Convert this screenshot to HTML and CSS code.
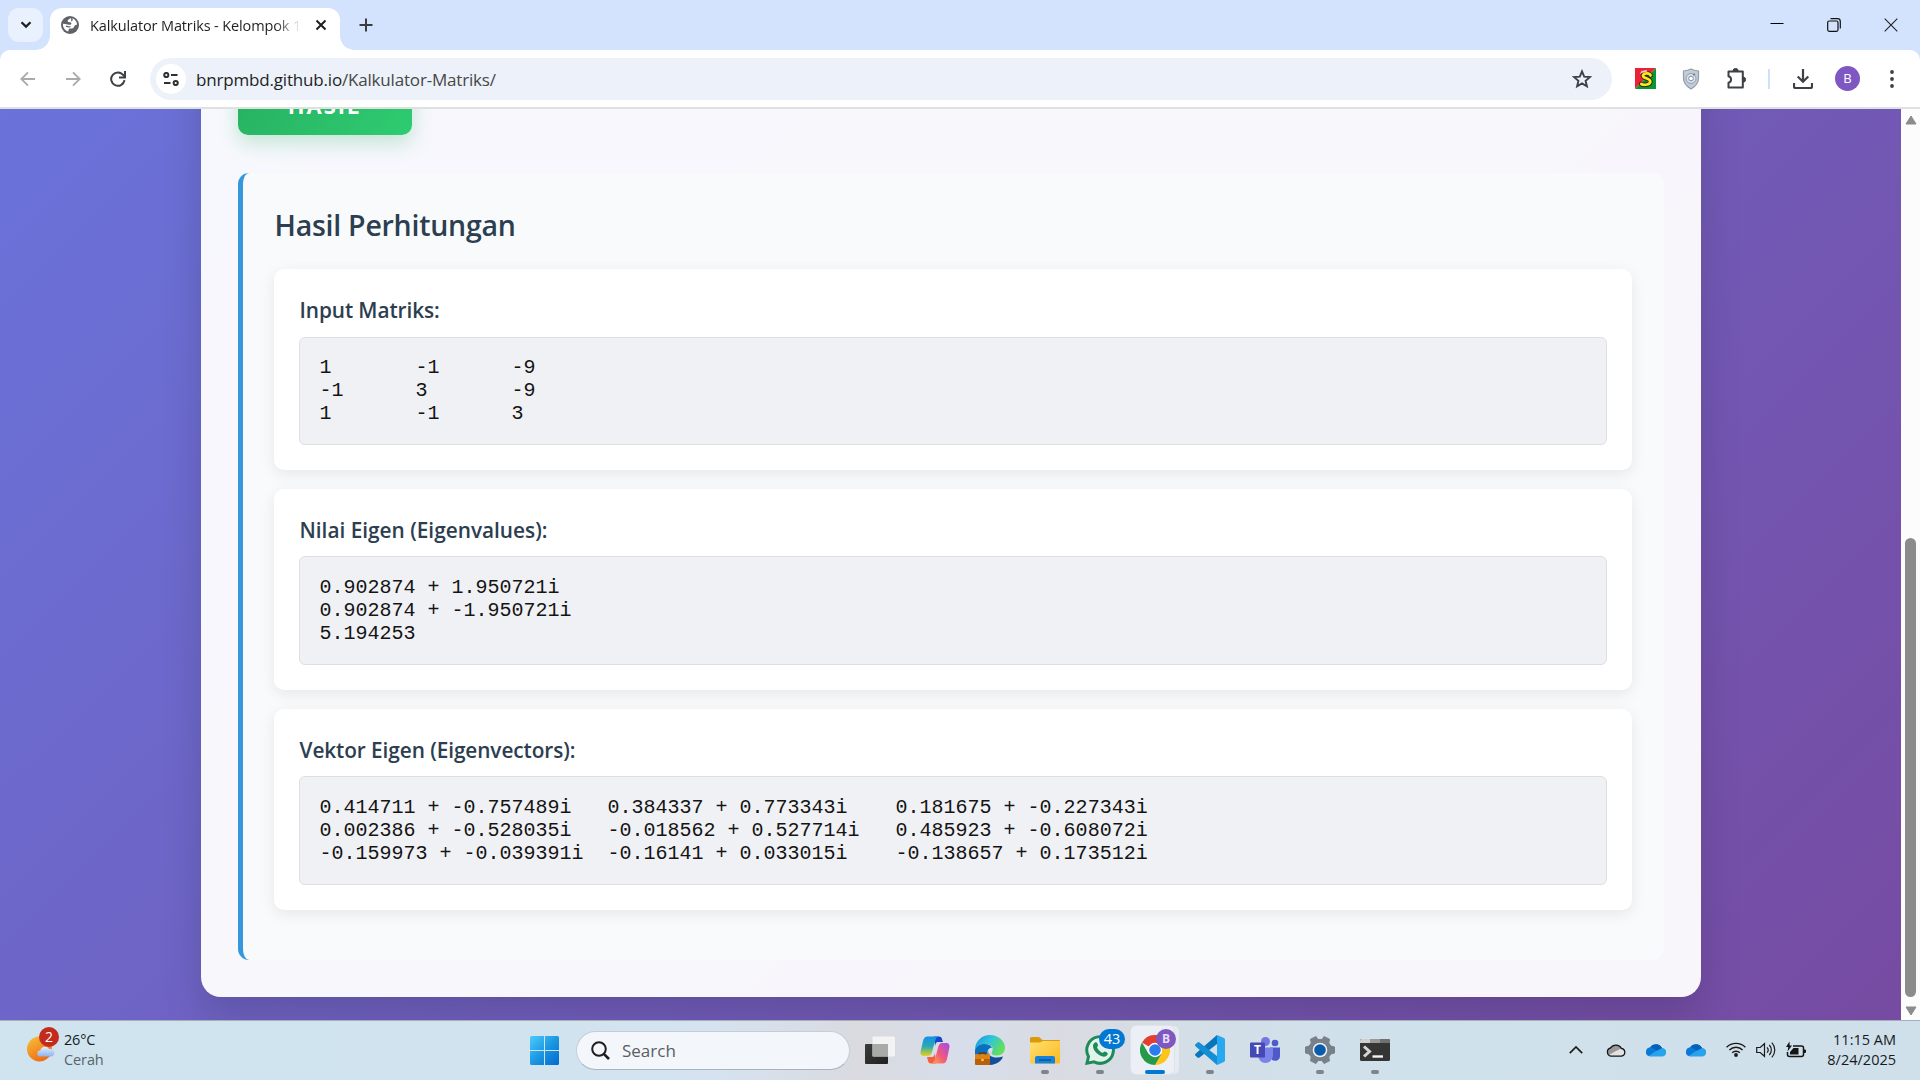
FILE: index.html
```html
<!DOCTYPE html>
<html lang="id">
<head>
<meta charset="utf-8">
<title>Kalkulator Matriks - Kelompok 1</title>
<link rel="stylesheet" href="styles.css">
</head>
<body>
<div class="screen">
  <header class="tabstrip">
    <div class="tab-search"><svg width="12" height="8" viewBox="0 0 12 8"><path d="M1.5 1.2 6 5.6l4.500-4.400" fill="none" stroke="#1f1f1f" stroke-width="2.200"/></svg></div>
    <div class="tab">
      <svg class="globe" width="18" height="18" viewBox="0 0 18 18"><circle cx="9" cy="9" r="9" fill="#5f6368"/><path d="M9.800 2C8.500 3 7 3.500 6.600 4.900c0 1.200 1.800 1.300 2.800 1.400 1 .2 1.200 1.300.7 2-.8 1-2.400.4-3.600.2C5 8.200 3.400 7.800 2 7.800 1.600 11.500 4 14.600 7 15.600c.9-.8.3-1.900 1-2.700 1-.8 2.700-.2 3.900-.7 1.500-.7 1.200-2.500 2.600-3.200.6-.3 1.100-.2 1.600-.1C16 5.300 13.300 2.300 9.800 2z" fill="#fff"/><path d="M10 2.500c1.800.4 1.200 2 .2 2.500M9.500 10.500c-1.500.8-3 .2-4.500-.4" fill="none" stroke="#5f6368" stroke-width="1.300"/></svg>
      <span class="tab-title">Kalkulator Matriks - Kelompok 1</span>
      <svg class="tab-close" width="12" height="12" viewBox="0 0 12 12"><path d="M1.500 1.500l9 9m0-9l-9 9" stroke="#1f1f1f" stroke-width="2"/></svg>
    </div>
    <svg class="new-tab" width="14" height="14" viewBox="0 0 14 14"><path d="M7 .5v13M.5 7h13" stroke="#3c3c3c" stroke-width="2"/></svg>
    <div class="window-controls">
      <svg width="14" height="14" viewBox="0 0 14 14"><path d="M.5 5.500h13" stroke="#000" stroke-width="1"/></svg>
      <svg width="14" height="14" viewBox="0 0 14 14"><rect x=".7" y="3" width="10.300" height="10.300" rx="1.500" fill="none" stroke="#111" stroke-width="1.200"/><path d="M3.500.7h7a2.800 2.800 0 0 1 2.800 2.800v7" fill="none" stroke="#111" stroke-width="1.200"/></svg>
      <svg width="14" height="14" viewBox="0 0 14 14"><path d="M.7.7l12.600 12.600m0-12.600L.7 13.300" stroke="#222" stroke-width="1.100"/></svg>
    </div>
  </header>

  <nav class="toolbar">
    <div class="nav-buttons">
      <svg width="16" height="16" viewBox="0 0 16 16"><path d="M15 8H1.500M8 1.300 1.300 8 8 14.700" fill="none" stroke="#a9abad" stroke-width="1.900"/></svg>
      <svg width="16" height="16" viewBox="0 0 16 16"><path d="M1 8h13.500M8 1.300 14.700 8 8 14.700" fill="none" stroke="#a9abad" stroke-width="1.900"/></svg>
      <svg width="16" height="16" viewBox="0 0 16 16"><path d="M14.500 9.200A6.700 6.700 0 1 1 13.400 4.300L14.700 6" fill="none" stroke="#3e4144" stroke-width="2"/><path d="M15 0v6.500H9" fill="none" stroke="#3e4144" stroke-width="2"/></svg>
    </div>
    <div class="omnibox">
      <span class="site-info"><svg width="16" height="14" viewBox="0 0 16 14"><g fill="none" stroke="#303133" stroke-width="2"><circle cx="3.300" cy="3" r="2.100"/><path d="M8 3h6.500M1 11h6.500"/><circle cx="12.700" cy="11" r="2.100"/></g></svg></span>
      <span class="url">bnrpmbd.github.io<span class="url-path">/Kalkulator-Matriks/</span></span>
      <svg class="star" width="20" height="20" viewBox="0 0 20 20"><path d="M10 2.400l2.200 5.200 5.700.5-4.300 3.700 1.300 5.500-4.900-2.900-4.900 2.900 1.300-5.500L2.100 8.100l5.700-.5z" fill="none" stroke="#3e4144" stroke-width="1.900"/></svg>
    </div>
    <div class="extensions">
      <svg width="21" height="21" viewBox="0 0 21 21"><path d="M0 0h21L0 21z" fill="#ee2038"/><path d="M21 0v21H0z" fill="#0a9636"/><g fill="none" stroke-linecap="round" stroke-linejoin="round"><path d="M15.500 7.500C15 5 9 4.500 8 7.500c-.6 3 7 2.500 7.300 5.800.2 3-5.800 4.700-9 2.700" stroke="#222b12" stroke-width="4.600"/><path d="M15.500 7.500C15 5 9 4.500 8 7.500c-.6 3 7 2.500 7.300 5.800.2 3-5.800 4.700-9 2.700" stroke="#ffe51c" stroke-width="2.800"/></g><path d="M4.500 6.500 6.500 3l5-1 1 1.500-6 1.500z" fill="#eec4c8"/></svg>
      <svg width="18" height="22" viewBox="0 0 18 22"><path d="M9 1c2.500 1.400 5 1.800 7.500 2v7c0 5-3 8.500-7.500 11-4.500-2.500-7.500-6-7.500-11V3C4 2.800 6.500 2.400 9 1z" fill="#c5ccd6" stroke="#929dab" stroke-width="1.200"/><circle cx="9" cy="10.500" r="5" fill="#d8e0e8" stroke="#8fa0b4"/><circle cx="9" cy="10.500" r="2.300" fill="#fff" stroke="#7d8fa5"/><path d="M11 7l2-1" stroke="#6f7f95" stroke-width="1.500"/></svg>
      <svg width="21" height="22" viewBox="0 0 21 22"><path d="M2.500 3.500h14.300v16H2.500v-4.700a3.400 3.400 0 0 0 0-6.600z" fill="none" stroke="#3e4144" stroke-width="2" stroke-linejoin="round"/><path d="M7 3a2.600 2.600 0 0 1 5.200 0zM17 9a2.600 2.600 0 0 1 0 5.200z" fill="#3e4144" stroke="#3e4144"/></svg>
      <i class="divider"></i>
      <svg width="20" height="20" viewBox="0 0 20 20"><path d="M10 0v12.500M4.700 7.500 10 12.800l5.300-5.300M1 14v3.500q0 1.500 1.500 1.500h15q1.500 0 1.500-1.500V14" fill="none" stroke="#3e4144" stroke-width="2.200"/></svg>
      <span class="avatar">B</span>
      <svg width="4" height="18" viewBox="0 0 4 18"><g fill="#3e4144"><circle cx="2" cy="2" r="1.900"/><circle cx="2" cy="9" r="1.900"/><circle cx="2" cy="16" r="1.900"/></g></svg>
    </div>
  </nav>

  <div class="viewport">
    <main class="page">
      <section class="container">
        <div class="submit">HASIL</div>
        <div class="results">
          <h2>Hasil Perhitungan</h2>
          <article class="card">
            <h3>Input Matriks:</h3>
<pre>1&#9;-1&#9;-9
-1&#9;3&#9;-9
1&#9;-1&#9;3</pre>
          </article>
          <article class="card tall">
            <h3 class="values">Nilai Eigen (Eigenvalues):</h3>
<pre>0.902874 + 1.950721i
0.902874 + -1.950721i
5.194253</pre>
          </article>
          <article class="card tall">
            <h3>Vektor Eigen (Eigenvectors):</h3>
<pre>0.414711 + -0.757489i&#9;0.384337 + 0.773343i&#9;0.181675 + -0.227343i
0.002386 + -0.528035i&#9;-0.018562 + 0.527714i&#9;0.485923 + -0.608072i
-0.159973 + -0.039391i&#9;-0.16141 + 0.033015i&#9;-0.138657 + 0.173512i</pre>
          </article>
        </div>
      </section>
    </main>
    <aside class="scrollbar">
      <svg width="12" height="10" viewBox="0 0 12 10"><path d="M6 1 11 9H1z" fill="#8b8b8b" stroke="#8b8b8b" stroke-linejoin="round"/></svg>
      <i class="thumb"></i>
      <svg width="12" height="10" viewBox="0 0 12 10"><path d="M6 9 11 1H1z" fill="#8b8b8b" stroke="#8b8b8b" stroke-linejoin="round"/></svg>
    </aside>
  </div>

  <footer class="taskbar">
    <div class="weather">
      <span class="weather-icon">
        <svg width="32" height="36" viewBox="0 0 32 36"><defs><linearGradient id="sun" x1="0" y1="0" x2=".6" y2="1"><stop offset="0" stop-color="#f5c33b"/><stop offset="1" stop-color="#f26a12"/></linearGradient><linearGradient id="cl" x1="0" y1="0" x2="0" y2="1"><stop offset="0" stop-color="#e2ecff"/><stop offset="1" stop-color="#8fb2ee"/></linearGradient></defs><circle cx="12.500" cy="22" r="12.500" fill="url(#sun)"/><path d="M13.500 29.500a3 3 0 0 1-.3-6 5 5 0 0 1 9-1.500 3.700 3.700 0 0 1 2.300 7.500z" fill="url(#cl)"/></svg>
        <b class="weather-badge">2</b>
      </span>
      <div class="weather-text"><span>26°C</span><span class="muted">Cerah</span></div>
    </div>

    <div class="dock">
      <svg class="start" width="29" height="29" viewBox="0 0 29 29"><defs><linearGradient id="win" x1="0" y1="0" x2="1" y2="1"><stop offset="0" stop-color="#4ccbfc"/><stop offset=".5" stop-color="#1c98e2"/><stop offset="1" stop-color="#0069cc"/></linearGradient></defs><path d="M1.500 0H14v14H0V1.500Q0 0 1.500 0zM15 0h12.500Q29 0 29 1.500V14H15zM0 15h14v14H1.500Q0 29 0 27.500zM15 15h14v12.500q0 1.500-1.500 1.500H15z" fill="url(#win)"/></svg>
      <div class="search"><svg width="19" height="19" viewBox="0 0 19 19"><circle cx="8" cy="8" r="6.800" fill="none" stroke="#1d1d1d" stroke-width="2"/><path d="M12.800 12.800 18 18" stroke="#1d1d1d" stroke-width="2.600"/></svg><span>Search</span></div>
      <div class="app"><svg width="30" height="30" viewBox="0 0 30 30"><defs><linearGradient id="tv" x1="0" y1="0" x2="1" y2="1"><stop offset="0" stop-color="#3b3b3b"/><stop offset="1" stop-color="#20211f"/></linearGradient></defs><rect x="0" y="9" width="23" height="20" rx="1" fill="url(#tv)"/><rect x="7.500" y="1.500" width="22.500" height="20" rx="1" fill="#f5f5f5" opacity=".9"/><path d="M7.500 9H23v12.500H7.500z" fill="#a9aba8"/></svg></div>
      <div class="app"><svg width="30" height="30" viewBox="0 0 30 30"><defs><linearGradient id="ca" x1="0" y1="0" x2="0" y2="1"><stop offset="0" stop-color="#1291ea"/><stop offset=".5" stop-color="#28aab0"/><stop offset="1" stop-color="#e8d020"/></linearGradient><linearGradient id="cb" x1="1" y1="0" x2="0" y2="1"><stop offset="0" stop-color="#a44bea"/><stop offset=".55" stop-color="#f0597c"/><stop offset="1" stop-color="#fda854"/></linearGradient></defs><path d="M14 1.500h5c3 0 3 3 4 5.500h-5c-2 0-2.500 2-3 4z" fill="#1746c9"/><path d="M7.500 1.500H18c-2 1-2.500 3-3.200 5.500l-3 10.500c-.7 2-1.500 3.500-4 3.500H4c-3 0-4-2-3.300-5L3 6c.8-3 2-4.500 4.500-4.500z" fill="url(#ca)"/><path d="M16 28.500h-5c-3 0-3-3-4-6.500h5c2 0 2.500-2 3-4z" fill="#f1613d"/><path d="M22.500 28.500H12c2-1 2.500-3 3.200-5.500l3-11c.7-2 1.500-4 4-4H26c3 0 4 2 3.300 5L27 24c-.8 3-2 4.500-4.500 4.500z" fill="url(#cb)"/></svg></div>
      <div class="app"><svg width="30" height="30" viewBox="0 0 30 30"><defs><linearGradient id="eg" x1="0" y1="0" x2="1" y2=".5"><stop offset="0" stop-color="#1793d9"/><stop offset=".5" stop-color="#30c3dc"/><stop offset="1" stop-color="#63e05b"/></linearGradient></defs><path d="M0 15C0 6 7 0 15 0s15 6 15 12.500c0 5-3.500 8-8 8-4 0-5.500-1.500-5.500-2.500 0-.8 1.200-1.500 1.200-4 0-3-3-5-7.700-5C5 9 1 11 0 15z" fill="url(#eg)"/><path d="M0 15C1 11 5 9 9.500 9c4 0 6.500 1.500 7.600 3.700-2.600-.2-4.600 1.800-4.600 4.300 0 1 .2 1.800.6 2.500H0z" fill="#0872c0"/><path d="M13 16c0 5 6 8.500 15 5.500-1.500 4.500-6 8-13 8.500v-9z" fill="#114f98"/><path d="M0 19.500h15V30H1q-1 0-1-1z" fill="#b85f0b"/><path d="M0 19.500h15V24H0z" fill="#dd8114"/><path d="M4.500 19.500V18h6v1.500" fill="none" stroke="#713705" stroke-width="1.400"/><circle cx="7.500" cy="25" r="1.300" fill="#ffd14a"/></svg></div>
      <div class="app"><svg width="30" height="30" viewBox="0 0 30 30"><defs><linearGradient id="fo" x1="0" y1="0" x2="1" y2="1"><stop offset="0" stop-color="#ffdf75"/><stop offset="1" stop-color="#fbb91b"/></linearGradient></defs><path d="M0 3.500Q0 2 1.500 2H9l3.500 3H29q1 0 1 1v5H0z" fill="#dd9a08"/><path d="M0 7.500h10L13 6h17v21q0 1.500-1.500 1.500h-27Q0 28.500 0 27z" fill="url(#fo)"/><path d="M5 28.500V23q0-2 2-2h16q2 0 2 2v5.500z" fill="#1482dc"/><path d="M9 25h12" stroke="#0a5293" stroke-width="1.400"/></svg><i class="dot"></i></div>
      <div class="app"><svg width="30" height="30" viewBox="0 0 30 30"><path d="M2 28.200l1.500-6.700A13.300 13.300 0 1 1 9 26.800z" fill="#e4f3ea" stroke="#1d8a5b" stroke-width="3"/><path d="M10 7.500c1.500-1 2.500.3 3 2.500.3 1.500-1.500 1.500-.7 3 1.200 2.200 2.800 3.800 5 4.700 1.400.5 1.500-1.500 3-1 2 .8 3 1.500 2.200 3-1.500 2.500-4.500 2.500-8 .6-3.500-2-6-5-6.500-8.500-.2-1.800.5-3.500 2-4.300z" fill="#1d8a5b"/></svg><i class="dot"></i><b class="count">43</b></div>
      <div class="app active"><svg width="30" height="30" viewBox="0 0 30 30"><path d="M15 15 2 7.500A15 15 0 0 1 28 7.500z" fill="#e53e30"/><path d="M28 7.500A15 15 0 0 1 15 30l6.500-11.500L20 7.500z" fill="#fdc51a"/><path d="M2 7.500A15 15 0 0 0 15 30l6.500-11.300-13 0z" fill="#269a48"/><circle cx="15" cy="15" r="7.200" fill="#fff"/><circle cx="15" cy="15" r="5.800" fill="#2b7cec"/></svg><i class="bar"></i><b class="profile">B</b></div>
      <div class="app"><svg width="30" height="30" viewBox="0 0 30 30"><path d="M22 0v9L4.500 22.500q-1 .8-2 0L.5 20.800q-1-1 0-2z" fill="#0877b9"/><path d="M22 30v-9L4.500 7.500q-1-.8-2 0L.5 9.200q-1 1 0 2z" fill="#138fd6"/><path d="M22 0l7 3q1 .5 1 1.800v20.400q0 1.300-1 1.800l-7 3z" fill="#27a9f2"/></svg><i class="dot"></i></div>
      <div class="app"><svg width="30" height="30" viewBox="0 0 30 30"><circle cx="15.500" cy="6.500" r="4.500" fill="#7278e0"/><circle cx="25" cy="8" r="3.300" fill="#5059c9"/><path d="M20 12.500h10V21c0 4-4 6-8 4z" fill="#5059c9"/><path d="M8 12.500h15V20a7.500 8 0 0 1-15 0z" fill="#7b83eb"/><rect y="7.500" width="15" height="15" rx="1" fill="#4449b5"/><text x="7.500" y="19" fill="#fff" font-family="Open Sans, sans-serif" font-size="12" font-weight="700" text-anchor="middle">T</text></svg></div>
      <div class="app"><svg width="30" height="30" viewBox="0 0 30 30"><path d="M11 1.500l2 3h4l2-3 5.500 2.700-.7 3.800 2 3L29.500 12v6l-3.700 1-2 3 .7 3.800L19 28.500l-2-3h-4l-2 3-5.500-2.700.7-3.800-2-3L.5 18v-6l3.700-1 2-3-.7-3.800z" fill="#78818a" stroke="#78818a" stroke-linejoin="round"/><circle cx="15" cy="15" r="7.300" fill="#eef1f4"/><circle cx="15" cy="15" r="5.800" fill="#0a5cab"/></svg><i class="dot"></i></div>
      <div class="app"><svg width="30" height="30" viewBox="0 0 30 30"><rect y="4" width="30" height="22" rx="1.500" fill="#353535"/><path d="M0 5.500Q0 4 1.500 4H10v4H0z" fill="#cfcfcf"/><path d="M10 4h10v4H10z" fill="#999"/><path d="M20 4h8.500Q30 4 30 5.500V8H20z" fill="#707070"/><path d="M4 11.500l5.500 5-5.500 5" fill="none" stroke="#d5d5d5" stroke-width="3"/><path d="M12.500 21.500H23" stroke="#f4f4f4" stroke-width="2.400"/></svg><i class="dot"></i></div>
    </div>

    <div class="tray">
      <svg width="14" height="8" viewBox="0 0 14 8"><path d="M.8 7.200 7 1l6.200 6.200" fill="none" stroke="#1c1c1c" stroke-width="1.700"/></svg>
      <svg width="20" height="14" viewBox="0 0 20 14"><path d="M5 13.200A4.200 4.200 0 0 1 4.500 5 6.500 6.500 0 0 1 15.500 5.500a3.900 3.900 0 0 1 0 7.700z" fill="#e3e3e3"/><path d="M4.500 5A6.500 6.500 0 0 1 15.500 5.500L10 8 3 12 1 9z" fill="#999"/><path d="M5 13.200A4.200 4.200 0 0 1 4.500 5 6.500 6.500 0 0 1 15.500 5.500a3.900 3.900 0 0 1 0 7.700z" fill="none" stroke="#151515" stroke-width="1.300"/></svg>
      <svg width="20" height="14" viewBox="0 0 20 14"><path d="M5 13.500A4.500 4.500 0 0 1 4 4.500 7 7 0 0 1 16 5a4.200 4.200 0 0 1 0 8.500z" fill="#26a3ea"/><path d="M4 4.500A7 7 0 0 1 16 5l-6 3-7.500 5A4.500 4.500 0 0 1 4 4.500z" fill="#0a78d4"/><path d="M5 4A6.500 6.500 0 0 1 16 5l-5 2.500z" fill="#0560b8"/></svg>
      <svg width="20" height="14" viewBox="0 0 20 14"><path d="M5 13.500A4.500 4.500 0 0 1 4 4.500 7 7 0 0 1 16 5a4.200 4.200 0 0 1 0 8.500z" fill="#26a3ea"/><path d="M4 4.500A7 7 0 0 1 16 5l-6 3-7.500 5A4.500 4.500 0 0 1 4 4.500z" fill="#0a78d4"/><path d="M5 4A6.500 6.500 0 0 1 16 5l-5 2.500z" fill="#0560b8"/></svg>
      <svg class="wifi" width="20" height="15" viewBox="0 0 20 15"><g fill="none" stroke="#1a1a1a" stroke-width="1.400"><path d="M.6 5.300a13.300 13.300 0 0 1 18.800 0M3.400 8a9.300 9.300 0 0 1 13.200 0M6.200 10.800a5.400 5.400 0 0 1 7.600 0"/></g><circle cx="10" cy="13" r="1.900" fill="#1a1a1a"/></svg>
      <svg class="volume" width="20" height="16" viewBox="0 0 20 16"><g fill="none" stroke="#1a1a1a" stroke-width="1.200"><path d="M.7 5.500h3.500L8.500 1.700v12.600l-4.300-3.800H.7z"/><path d="M11 5.300a4 4 0 0 1 0 5.400M13.300 3a7.200 7.200 0 0 1 0 10M15.800.7a10.500 10.500 0 0 1 0 14.600"/></g></svg>
      <svg class="battery" width="20" height="17" viewBox="0 0 20 17"><path d="M7 5h8.500q2 0 2 2v6.500q0 2-2 2h-12q-2 0-2-2V11" fill="none" stroke="#151515" stroke-width="1.500"/><path d="M18 8.500h1q1 0 1 1V11q0 1-1 1h-1zM7.500 7h5v6.500H4V11z" fill="#151515"/><path d="M3.500.5 0 6h2.300L1.500 10.500 6 4.500H3.700z" fill="#151515"/></svg>
      <div class="clock"><span class="time">11:15 AM</span><span class="date">8/24/2025</span></div>
    </div>
  </footer>
</div>
</body>
</html>
```
FILE: styles.css
```css
* { box-sizing: border-box; }
body { margin: 0; font-family: "Open Sans", "Noto Sans", sans-serif; }
svg { display: block; flex: none; }
i { display: block; }
.screen { width: 1920px; height: 1080px; display: flex; flex-direction: column; overflow: hidden; background: #d3e2fd; }

/* Tab strip */
.tabstrip { height: 50px; flex: none; display: flex; align-items: flex-start; padding: 8px 22px 0 8px; }
.tab-search { width: 35px; height: 34px; border-radius: 11px; background: #e9f1fe; display: flex; align-items: center; justify-content: center; }
.tab { position: relative; width: 290px; height: 42px; margin-left: 7px; padding: 0 14px 8px 11px; border-radius: 12px 12px 0 0; background: #fff; display: flex; align-items: center; }
.tab::before, .tab::after { content: ""; position: absolute; bottom: 0; width: 14px; height: 14px; }
.tab::before { left: -14px; background: radial-gradient(circle at 0 0, transparent 13.500px, #fff 14px); }
.tab::after { right: -14px; background: radial-gradient(circle at 100% 0, transparent 13.500px, #fff 14px); }
.tab-title { width: 211px; margin: 0 14px 0 11px; padding-top: 1px; font-size: 14.500px; letter-spacing: -.13px; line-height: 20px; white-space: nowrap; color: #1f1f1f; -webkit-mask-image: linear-gradient(90deg, #000 185px, transparent 211px); mask-image: linear-gradient(90deg, #000 185px, transparent 211px); }
.new-tab { margin: 10px 0 0 19px; }
.window-controls { display: flex; gap: 43px; margin: 10px 0 0 auto; }

/* Toolbar */
.toolbar { height: 59px; flex: none; background: #fff; border-bottom: 2px solid #dfe1e0; border-radius: 10px 10px 0 0; display: flex; align-items: center; padding: 0 26px 0 20px; }
.nav-buttons { display: flex; gap: 29px; width: 130px; }
.omnibox { width: 1462px; height: 42px; border-radius: 21px; background: #ecf1fa; display: flex; align-items: center; padding: 0 20px 0 6px; }
.site-info { width: 30px; height: 30px; border-radius: 50%; background: #fff; display: flex; align-items: center; justify-content: center; }
.url { margin-left: 10px; padding-top: 2px; font-size: 17px; letter-spacing: -.18px; color: #1f1f1f; white-space: nowrap; }
.url-path { color: #474747; }
.star { margin-left: auto; }
.extensions { flex: 1; display: flex; align-items: center; padding-left: 23px; }
.extensions > :nth-child(2) { margin-left: 26px; }
.extensions > :nth-child(3) { margin-left: 26px; }
.divider { width: 2px; height: 20px; background: #cfe0fc; margin-left: 21px; }
.divider + svg { margin-left: 23px; }
.avatar { width: 25px; height: 25px; margin: 0 auto 0 22px; border-radius: 50%; background: #7e57c2; color: #fff; font-size: 13px; line-height: 25px; text-align: center; }

/* Web page */
.viewport { flex: 1; min-height: 0; display: flex; }
.page { width: 1901px; display: flex; flex-direction: column; justify-content: flex-end; align-items: center; padding-bottom: 23px; overflow: hidden; background: linear-gradient(135deg, #667eea 0%, #764ba2 100%) 0 100% / 1901px 1737px no-repeat; }
.container { width: 1500px; flex: none; padding: 37px; border-radius: 20px; background: rgba(255, 255, 255, .95); box-shadow: 0 20px 40px rgba(0, 0, 0, .15); display: flex; flex-direction: column; align-items: flex-start; }
.submit { width: 174px; height: 60px; border-radius: 10px; background: linear-gradient(135deg, #27ae60, #2ecc71); box-shadow: 0 8px 20px rgba(39, 174, 96, .25); color: #fff; font-weight: 700; font-size: 22px; letter-spacing: 1.900px; line-height: 60px; text-align: center; }
.results { align-self: stretch; margin-top: 38px; height: 787px; padding: 31px 31px 0; border-left: 5px solid #3498db; border-radius: 11px; background: #f8fafc; }
h2 { margin: 0 0 19px; height: 46px; padding-left: 1px; line-height: 43px; font-size: 28.500px; letter-spacing: -.25px; font-weight: 600; color: #2c3e50; }
.card { width: 1358px; height: 201px; margin-bottom: 19px; padding: 25px; border-radius: 10px; background: #fff; box-shadow: 0 4px 15px rgba(0, 0, 0, .08); }
h3 { margin: 0 0 11px; height: 32px; padding-left: 1px; line-height: 32px; font-size: 20.800px; letter-spacing: -.08px; font-weight: 600; color: #2c3e50; }
h3.values { letter-spacing: 0; }
pre { margin: 0; height: 108px; padding: 18px 20px; border: 1px solid #dddfe2; border-radius: 6px; background: #f0f1f5; color: #141414; font: 20px/23px "Liberation Mono", monospace; tab-size: 8; }
.tall h3 { margin-bottom: 10px; }
.tall pre { height: 109px; padding-top: 19px; }
.scrollbar { width: 19px; background: #fcfcfc; display: flex; flex-direction: column; align-items: center; padding: 6px 0 4px; }
.thumb { width: 11px; height: 459px; margin: auto 0 9px; border-radius: 6px; background: #8b8b8b; }

/* Taskbar */
.taskbar { height: 60px; flex: none; border-top: 1px solid #a6afb8; background: linear-gradient(90deg, #cfe4ee 0, #d0e3ef 500px, #d5e3f1 700px, #dadae0 860px, #d7deea 960px, #dadbe2 1060px, #d3dfe8 1220px, #cfe1eb 1400px, #d0e0eb 100%); display: grid; grid-template-columns: 530px 1fr 360px; }
.weather { display: flex; padding: 6px 0 0 27px; }
.weather-icon { position: relative; width: 32px; height: 36px; }
.weather-badge { position: absolute; left: 12px; top: 0; width: 20px; height: 20px; border-radius: 50%; background: #c42b1c; color: #fff; font-size: 14px; font-weight: 400; line-height: 20px; text-align: center; }
.weather-text { display: flex; flex-direction: column; padding: 3px 0 0 5px; font-size: 14.500px; line-height: 20px; letter-spacing: -.2px; color: #171b1e; }
.weather-text .muted { color: #58646b; letter-spacing: -.1px; }
.dock { display: flex; align-items: flex-start; }
.start { margin: 15px 17px 0 0; }
.search { width: 274px; height: 39px; margin: 10px 3px 0 0; padding-left: 14px; border-radius: 20px; border: 1px solid #c5ced8; border-bottom-color: #a9b3bd; background: #f3f7fb; display: flex; align-items: center; gap: 12px; font-size: 17px; color: #5a5d60; }
.app { position: relative; width: 55px; height: 59px; padding: 14px 1px 0 0; display: flex; flex-direction: column; align-items: center; isolation: isolate; }
.dot { width: 8px; height: 4px; margin-top: 5px; border-radius: 2px; background: #7d848a; }
.bar { width: 20px; height: 4px; margin-top: 5px; border-radius: 2px; background: #0078d4; }
.active::before { content: ""; position: absolute; z-index: -1; left: 3px; top: 5px; width: 43px; height: 48px; border-radius: 5px; background: #eceff5; box-shadow: 0 0 0 1px #dee2e9, 5px 0 0 0 #e6eaf1; }
.count { position: absolute; left: 26px; top: 8px; width: 26px; height: 20px; border-radius: 10px; background: #0078d4; color: #fff; font-size: 14.500px; font-weight: 400; line-height: 20px; text-align: center; }
.profile { position: absolute; left: 28px; top: 8px; width: 20px; height: 20px; border-radius: 50%; background: #7e57c2; color: #e8dcf8; font-size: 12px; line-height: 20px; text-align: center; }
.tray { display: flex; align-items: center; padding: 0 24px 2px 9px; }
.tray > svg + svg { margin-left: 20px; }
.tray > svg:nth-child(2) { margin-left: 23px; }
.tray > svg.volume, .tray > svg.battery { margin-left: 10px; }
.clock { margin-left: auto; display: flex; flex-direction: column; align-items: flex-end; font-size: 14.500px; line-height: 20px; color: #171b1e; white-space: nowrap; }
```
